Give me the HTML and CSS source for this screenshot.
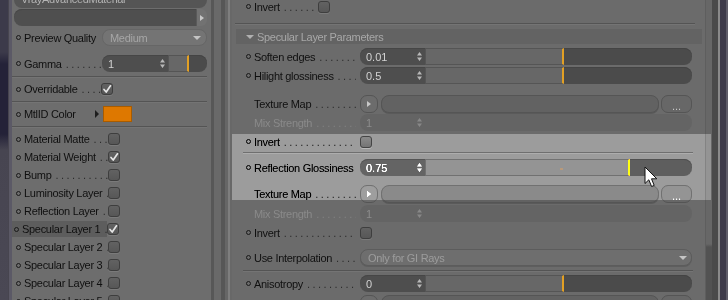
FILE: index.html
```html
<!DOCTYPE html>
<html lang="en">
<head>
    <meta charset="UTF-8">
    <title>VrayAdvancedMaterial - Specular Layer Parameters</title>
    <link rel="stylesheet" href="styles.css">
</head>
<body>
<div class="screen">
    <div class="edge-left"></div>

    <!-- material channels -->
    <div class="panel left">
        <div class="name-field">VrayAdvancedMaterial</div>
        <div class="link-row">
            <div class="link-field"></div>
            <div class="link-btn"><i class="tri-r light"></i></div>
        </div>
        <div class="row pq">
            <div class="label"><i class="dot"></i><span>Preview Quality</span></div>
            <div class="select off"><span>Medium</span><i class="tri-d"></i></div>
        </div>
        <div class="row gamma">
            <div class="label lead"><i class="dot"></i><span>Gamma</span></div>
            <div class="num gnum"><span>1</span><svg class="spin" width="5" height="9" viewBox="0 0 5 9"><path d="M2.5 0L5 3.5H0zM2.5 9L5 5.5H0z"/></svg></div>
            <div class="slider"><div class="fill" style="width:18px"></div></div>
        </div>
        <div class="sep s1"></div>
        <div class="row short over">
            <div class="label lead"><i class="dot"></i><span>Overridable</span></div>
            <span class="check on"><svg width="10" height="10" viewBox="0 0 10 10"><path d="M2 5.5L4.2 8L8.5 1.8"/></svg></span>
        </div>
        <div class="sep s2"></div>
        <div class="row short mtl">
            <div class="label"><i class="dot"></i><span>MtlID Color</span></div>
            <i class="tri-r dark"></i>
            <span class="swatch"></span>
        </div>
        <div class="sep s2"></div>

        <div class="channels">
            <div class="row short"><div class="label lead"><i class="dot"></i><span>Material Matte</span></div><span class="check"></span></div>
            <div class="row short"><div class="label lead"><i class="dot"></i><span>Material Weight</span></div><span class="check on"><svg width="10" height="10" viewBox="0 0 10 10"><path d="M2 5.5L4.2 8L8.5 1.8"/></svg></span></div>
            <div class="row short"><div class="label lead"><i class="dot"></i><span>Bump</span></div><span class="check"></span></div>
            <div class="row short"><div class="label lead"><i class="dot"></i><span>Luminosity Layer</span></div><span class="check"></span></div>
            <div class="row short"><div class="label lead"><i class="dot"></i><span>Reflection Layer</span></div><span class="check"></span></div>
            <div class="row short"><div class="label lead picked"><i class="dot"></i><span>Specular Layer 1</span></div><span class="check on"><svg width="10" height="10" viewBox="0 0 10 10"><path d="M2 5.5L4.2 8L8.5 1.8"/></svg></span></div>
            <div class="row short"><div class="label lead"><i class="dot"></i><span>Specular Layer 2</span></div><span class="check"></span></div>
            <div class="row short"><div class="label lead"><i class="dot"></i><span>Specular Layer 3</span></div><span class="check"></span></div>
            <div class="row short"><div class="label lead"><i class="dot"></i><span>Specular Layer 4</span></div><span class="check"></span></div>
            <div class="row short"><div class="label lead"><i class="dot"></i><span>Specular Layer 5</span></div><span class="check"></span></div>
        </div>
    </div>

    <div class="gutter"></div>

    <!-- specular layer attributes -->
    <div class="panel right">
        <div class="row top-invert">
            <div class="label lead"><i class="dot"></i><span>Invert</span></div>
            <span class="check"></span>
        </div>
        <div class="sep wide"></div>
        <div class="group-head"><i class="tri-d head"></i><span>Specular Layer Parameters</span></div>

        <div class="row first">
            <div class="label lead"><i class="dot"></i><span>Soften edges</span></div>
            <div class="num"><span>0.01</span><svg class="spin" width="5" height="9" viewBox="0 0 5 9"><path d="M2.5 0L5 3.5H0zM2.5 9L5 5.5H0z"/></svg></div>
            <div class="slider"><div class="fill" style="width:136px"></div></div>
        </div>
        <div class="row">
            <div class="label lead"><i class="dot"></i><span>Hilight glossiness</span></div>
            <div class="num"><span>0.5</span><svg class="spin" width="5" height="9" viewBox="0 0 5 9"><path d="M2.5 0L5 3.5H0zM2.5 9L5 5.5H0z"/></svg></div>
            <div class="slider"><div class="fill" style="width:136px"></div></div>
        </div>
        <div class="row tex first-tex">
            <div class="label lead"><i class="dot blank"></i><span>Texture Map</span></div>
            <span class="map-btn"><i class="tri-r light"></i></span>
            <span class="map-field"></span>
            <span class="more">...</span>
        </div>
        <div class="row off">
            <div class="label lead"><i class="dot blank"></i><span>Mix Strength</span></div>
            <div class="num"><span>1</span><svg class="spin" width="5" height="9" viewBox="0 0 5 9"><path d="M2.5 0L5 3.5H0zM2.5 9L5 5.5H0z"/></svg></div>
            <div class="slider"></div>
        </div>
        <div class="row">
            <div class="label lead"><i class="dot"></i><span>Invert</span></div>
            <span class="check"></span>
        </div>
        <div class="sep mid"></div>

        <div class="row refl">
            <div class="label"><i class="dot"></i><span>Reflection Glossiness</span></div>
            <div class="num"><span>0.75</span><svg class="spin" width="5" height="9" viewBox="0 0 5 9"><path d="M2.5 0L5 3.5H0zM2.5 9L5 5.5H0z"/></svg></div>
            <div class="slider"><div class="fill" style="width:202px"></div><i class="ghost"></i></div>
        </div>
        <div class="row tex refl-tex">
            <div class="label lead"><i class="dot blank"></i><span>Texture Map</span></div>
            <span class="map-btn"><i class="tri-r light"></i></span>
            <span class="map-field"></span>
            <span class="more">...</span>
        </div>
        <div class="row off tight">
            <div class="label lead"><i class="dot blank"></i><span>Mix Strength</span></div>
            <div class="num"><span>1</span><svg class="spin" width="5" height="9" viewBox="0 0 5 9"><path d="M2.5 0L5 3.5H0zM2.5 9L5 5.5H0z"/></svg></div>
            <div class="slider"></div>
        </div>
        <div class="row">
            <div class="label lead"><i class="dot"></i><span>Invert</span></div>
            <span class="check"></span>
        </div>
        <div class="row interp">
            <div class="label lead"><i class="dot"></i><span>Use Interpolation</span></div>
            <div class="select off wide-sel"><span>Only for GI Rays</span><i class="tri-d"></i></div>
        </div>
        <div class="sep mid low"></div>
        <div class="row aniso">
            <div class="label lead"><i class="dot"></i><span>Anisotropy</span></div>
            <div class="num"><span>0</span><svg class="spin" width="5" height="9" viewBox="0 0 5 9"><path d="M2.5 0L5 3.5H0zM2.5 9L5 5.5H0z"/></svg></div>
            <div class="slider"><div class="fill" style="width:136px"></div></div>
        </div>
        <div class="row tex tight">
            <div class="label lead"><i class="dot blank"></i><span>Texture Map</span></div>
            <span class="map-btn"><i class="tri-r light"></i></span>
            <span class="map-field"></span>
            <span class="more">...</span>
        </div>
    </div>

    <div class="scroll"></div>
    <div class="edge-right"></div>

    <!-- hover highlight and pointer -->
    <div class="hover-band"></div>
    <svg class="pointer" width="14" height="22" viewBox="0 0 14 22">
        <path d="M1 1L1 17.5L4.8 13.8L7.6 20.5L10.2 19.4L7.5 12.8L12.8 12.8Z"/>
    </svg>
</div>
</body>
</html>
```

FILE: styles.css
```css
* {
    box-sizing: border-box;
}
html, body {
    margin: 0;
    padding: 0;
}
body {
    background: #2a2838;
    font-family: "Liberation Sans", Arial, sans-serif;
    font-size: 11px;
    letter-spacing: -0.3px;
    color: #101010;
    overflow: hidden;
}
.screen {
    position: relative;
    display: flex;
    width: 728px;
    height: 300px;
    overflow: hidden;
}

/* frame pieces */
.edge-left {
    width: 12px;
    background: linear-gradient(to bottom, #3c3a4a 0, #3c3a4a 52px, #242238 64px, #242238 134px, #474551 150px, #4a4854 100%);
    box-shadow: inset -3px 0 0 #5b5966, inset -4px 0 0 #47454f;
}
.gutter {
    width: 21px;
    background: linear-gradient(to right, #575757 0, #575757 3px, #696969 3px, #696969 10px, #565656 10px, #565656 14px, #666 14px, #666 17px, #7e7e7e 17px, #7e7e7e 19px, #686868 19px);
}
.scroll {
    width: 7px;
    background: linear-gradient(to bottom, #676767 0, #676767 244px, #525252 247px, #525252 100%);
    box-shadow: inset 1px 0 0 #5e5e5e;
}
.edge-right {
    width: 16px;
    background: linear-gradient(to right, #4a4a4a 0, #4a4a4a 6px, #8a8a8a 6px, #8a8a8a 8px, #3d3a49 8px, #3d3a49 14px, #5e5c68 14px);
}

.panel {
    overflow: hidden;
}
.left {
    width: 199px;
    padding: 0 4px 0 2px;
    background: #6d6d6d;
}
.right {
    width: 473px;
    padding: 0 13px 0 14px;
    background: #6b6b6b;
}

/* rows and labels */
.row {
    display: flex;
    align-items: center;
    height: 19px;
}
.row.short {
    height: 18px;
}
.label {
    display: flex;
    align-items: center;
    flex: none;
    height: 100%;
    white-space: nowrap;
    overflow: hidden;
}
.left .label {
    width: 88px;
    padding-left: 2px;
}
.left .channels .label {
    width: 94px;
}
.right .label {
    width: 114px;
    padding-right: 4px;
}
.right .top-invert .label {
    width: 72px;
}
.lead::after {
    content: ". . . . . . . . . . . . . . . . . . . . . . . . . . . .";
    flex: 1;
    min-width: 0;
    overflow: hidden;
    margin-left: 4px;
    color: #2c2c2c;
}
.dot {
    flex: none;
    width: 5px;
    height: 5px;
    margin-right: 3px;
    border: 1px solid #1a1a1a;
    border-radius: 50%;
}
.dot.blank {
    border-color: transparent;
}
.picked {
    background: #5d5d5d;
    margin-left: -2px;
    padding-left: 4px;
    width: 95px !important;
    height: 16px;
}

/* separators */
.sep {
    height: 2px;
    border-top: 1px solid #545454;
    border-bottom: 1px solid #747474;
}
.left .sep {
    margin-left: -2px;
}
.sep.s1 {
    margin-top: 3px;
}
.sep.s2 {
    margin-top: 3px;
}
.sep.wide {
    margin: 7px -3px 0 -11px;
}
.sep.mid {
    margin: 1px -1px 0 -3px;
}
.sep.low {
    margin-top: 3px;
}

/* left panel specifics */
.name-field {
    margin-top: -10px;
    height: 18px;
    line-height: 18px;
    padding-left: 7px;
    border-radius: 8px;
    background: #555;
    color: #b4b4b4;
}
.link-row {
    display: flex;
    margin-top: 1px;
    height: 17px;
}
.link-field {
    flex: 1;
    background: #4f4f4f;
    border-radius: 8px 0 0 8px;
    box-shadow: inset 0 1px 0 #474747;
}
.link-btn {
    display: flex;
    align-items: center;
    justify-content: center;
    width: 11px;
    background: #727272;
    border-left: 1px solid #5a5a5a;
    border-radius: 0 6px 6px 0;
}
.row.pq {
    margin-top: 2px;
}
.row.gamma {
    margin-top: 7px;
}
.row.over {
    margin-top: 2px;
}
.row.mtl {
    margin-top: 2px;
}
.channels {
    margin-top: 2px;
}
.swatch {
    width: 29px;
    height: 16px;
    margin-left: 4px;
    background: #de7800;
    border: 1px solid #a95c00;
}

/* controls */
.check {
    flex: none;
    display: flex;
    align-items: center;
    justify-content: center;
    width: 12px;
    height: 12px;
    border: 1px solid #3e3e3e;
    border-radius: 3px;
    background: linear-gradient(#626262, #575757);
    box-shadow: 0 1px 0 #7a7a7a;
}
.left .over .check {
    margin-left: -1px;
}
.check svg path {
    fill: none;
    stroke: #e6e6e6;
    stroke-width: 1.7;
    stroke-linecap: round;
    stroke-linejoin: round;
}
.num {
    flex: none;
    position: relative;
    display: flex;
    align-items: center;
    width: 65px;
    height: 17px;
    padding-left: 6px;
    border-radius: 8px 0 0 8px;
    background: #4e4e4e;
    box-shadow: inset 0 1px 0 #464646;
    color: #d2d2d2;
    letter-spacing: 0;
}
.num.gnum {
    width: 66px;
}
.spin {
    position: absolute;
    right: 3px;
    top: 4px;
    fill: #b8b8b8;
}
.slider {
    flex: 1;
    position: relative;
    display: flex;
    height: 17px;
    border-radius: 0 8px 8px 0;
    background: #4b4b4b;
    box-shadow: inset 0 1px 0 #444;
    overflow: hidden;
}
.fill {
    background: #676767;
    border-top: 1px solid #555;
    border-bottom: 1px solid #555;
    border-left: 1px solid #555;
    border-right: 2px solid #e2a024;
    box-sizing: content-box;
    height: 15px;
}
.ghost {
    position: absolute;
    left: 135px;
    top: 9px;
    width: 3px;
    height: 2px;
    background: #7a6a5a;
}
.select {
    display: flex;
    align-items: center;
    justify-content: space-between;
    width: 105px;
    height: 17px;
    padding: 0 5px 0 7px;
    border-radius: 8px;
    background: #747474;
    border: 1px solid #666;
    color: #a6a6a6;
}
.select.wide-sel {
    flex: 1;
    background: #6e6e6e;
    border-color: #5c5c5c;
    box-shadow: 0 1px 0 #5e5e5e;
    color: #9c9c9c;
    padding-right: 4px;
}
.tri-d {
    width: 0;
    height: 0;
    border-left: 4px solid transparent;
    border-right: 4px solid transparent;
    border-top: 4px solid #c4c4c4;
}
.tri-d.head {
    margin: 0 3px 0 0;
    border-top-color: #b0b0b0;
}
.tri-r {
    width: 0;
    height: 0;
    border-top: 3px solid transparent;
    border-bottom: 3px solid transparent;
    border-left: 4px solid #c8c8c8;
}
.tri-r.dark {
    margin-left: -7px;
    border-top-width: 4px;
    border-bottom-width: 4px;
    border-left-color: #1e1e1e;
}
.map-btn {
    flex: none;
    display: flex;
    align-items: center;
    justify-content: center;
    width: 18px;
    height: 18px;
    border-radius: 7px;
    background: #6c6c6c;
    border: 1px solid #555;
}
.map-field {
    flex: 1;
    height: 18px;
    margin-left: 3px;
    border-radius: 8px;
    background: #626262;
    border: 1px solid #555;
    box-shadow: 0 1px 0 #5a5a5a;
}
.more {
    flex: none;
    width: 31px;
    height: 18px;
    margin-left: 2px;
    border-radius: 7px;
    background: #676767;
    border: 1px solid #555;
    color: #c6c6c6;
    text-align: center;
    line-height: 20px;
    letter-spacing: 0;
}

/* group header */
.group-head {
    display: flex;
    align-items: center;
    height: 15px;
    margin: 4px -10px 0 -10px;
    padding-left: 10px;
    background: #636363;
    color: #a8a8a8;
}

/* vertical rhythm of the right panel */
.row.top-invert {
    margin-top: -3px;
}
.row.first {
    margin-top: 3px;
}
.row.first-tex {
    margin-top: 9px;
}
.row.refl {
    margin-top: 4px;
}
.row.refl-tex {
    margin-top: 7px;
}
.row.tight {
    margin-top: 1px;
}
.row.interp {
    margin-top: 6px;
}
.row.aniso {
    margin-top: 2px;
}

/* disabled rows */
.row.off .label {
    color: #8a8a8a;
}
.row.off .lead::after {
    color: #808080;
}
.row.off .num {
    background: #646464;
    box-shadow: none;
    color: #8c8c8c;
}
.row.off .spin {
    fill: #888;
}
.row.off .slider {
    background: #646464;
    box-shadow: none;
}

/* overlays */
.hover-band {
    position: absolute;
    left: 232px;
    top: 134px;
    width: 479px;
    height: 66px;
    backdrop-filter: brightness(1.38) contrast(1.4);
}
.pointer {
    position: absolute;
    left: 644px;
    top: 166px;
}
.pointer path {
    fill: #fff;
    stroke: #111;
    stroke-width: 1;
    stroke-linejoin: round;
}
```
